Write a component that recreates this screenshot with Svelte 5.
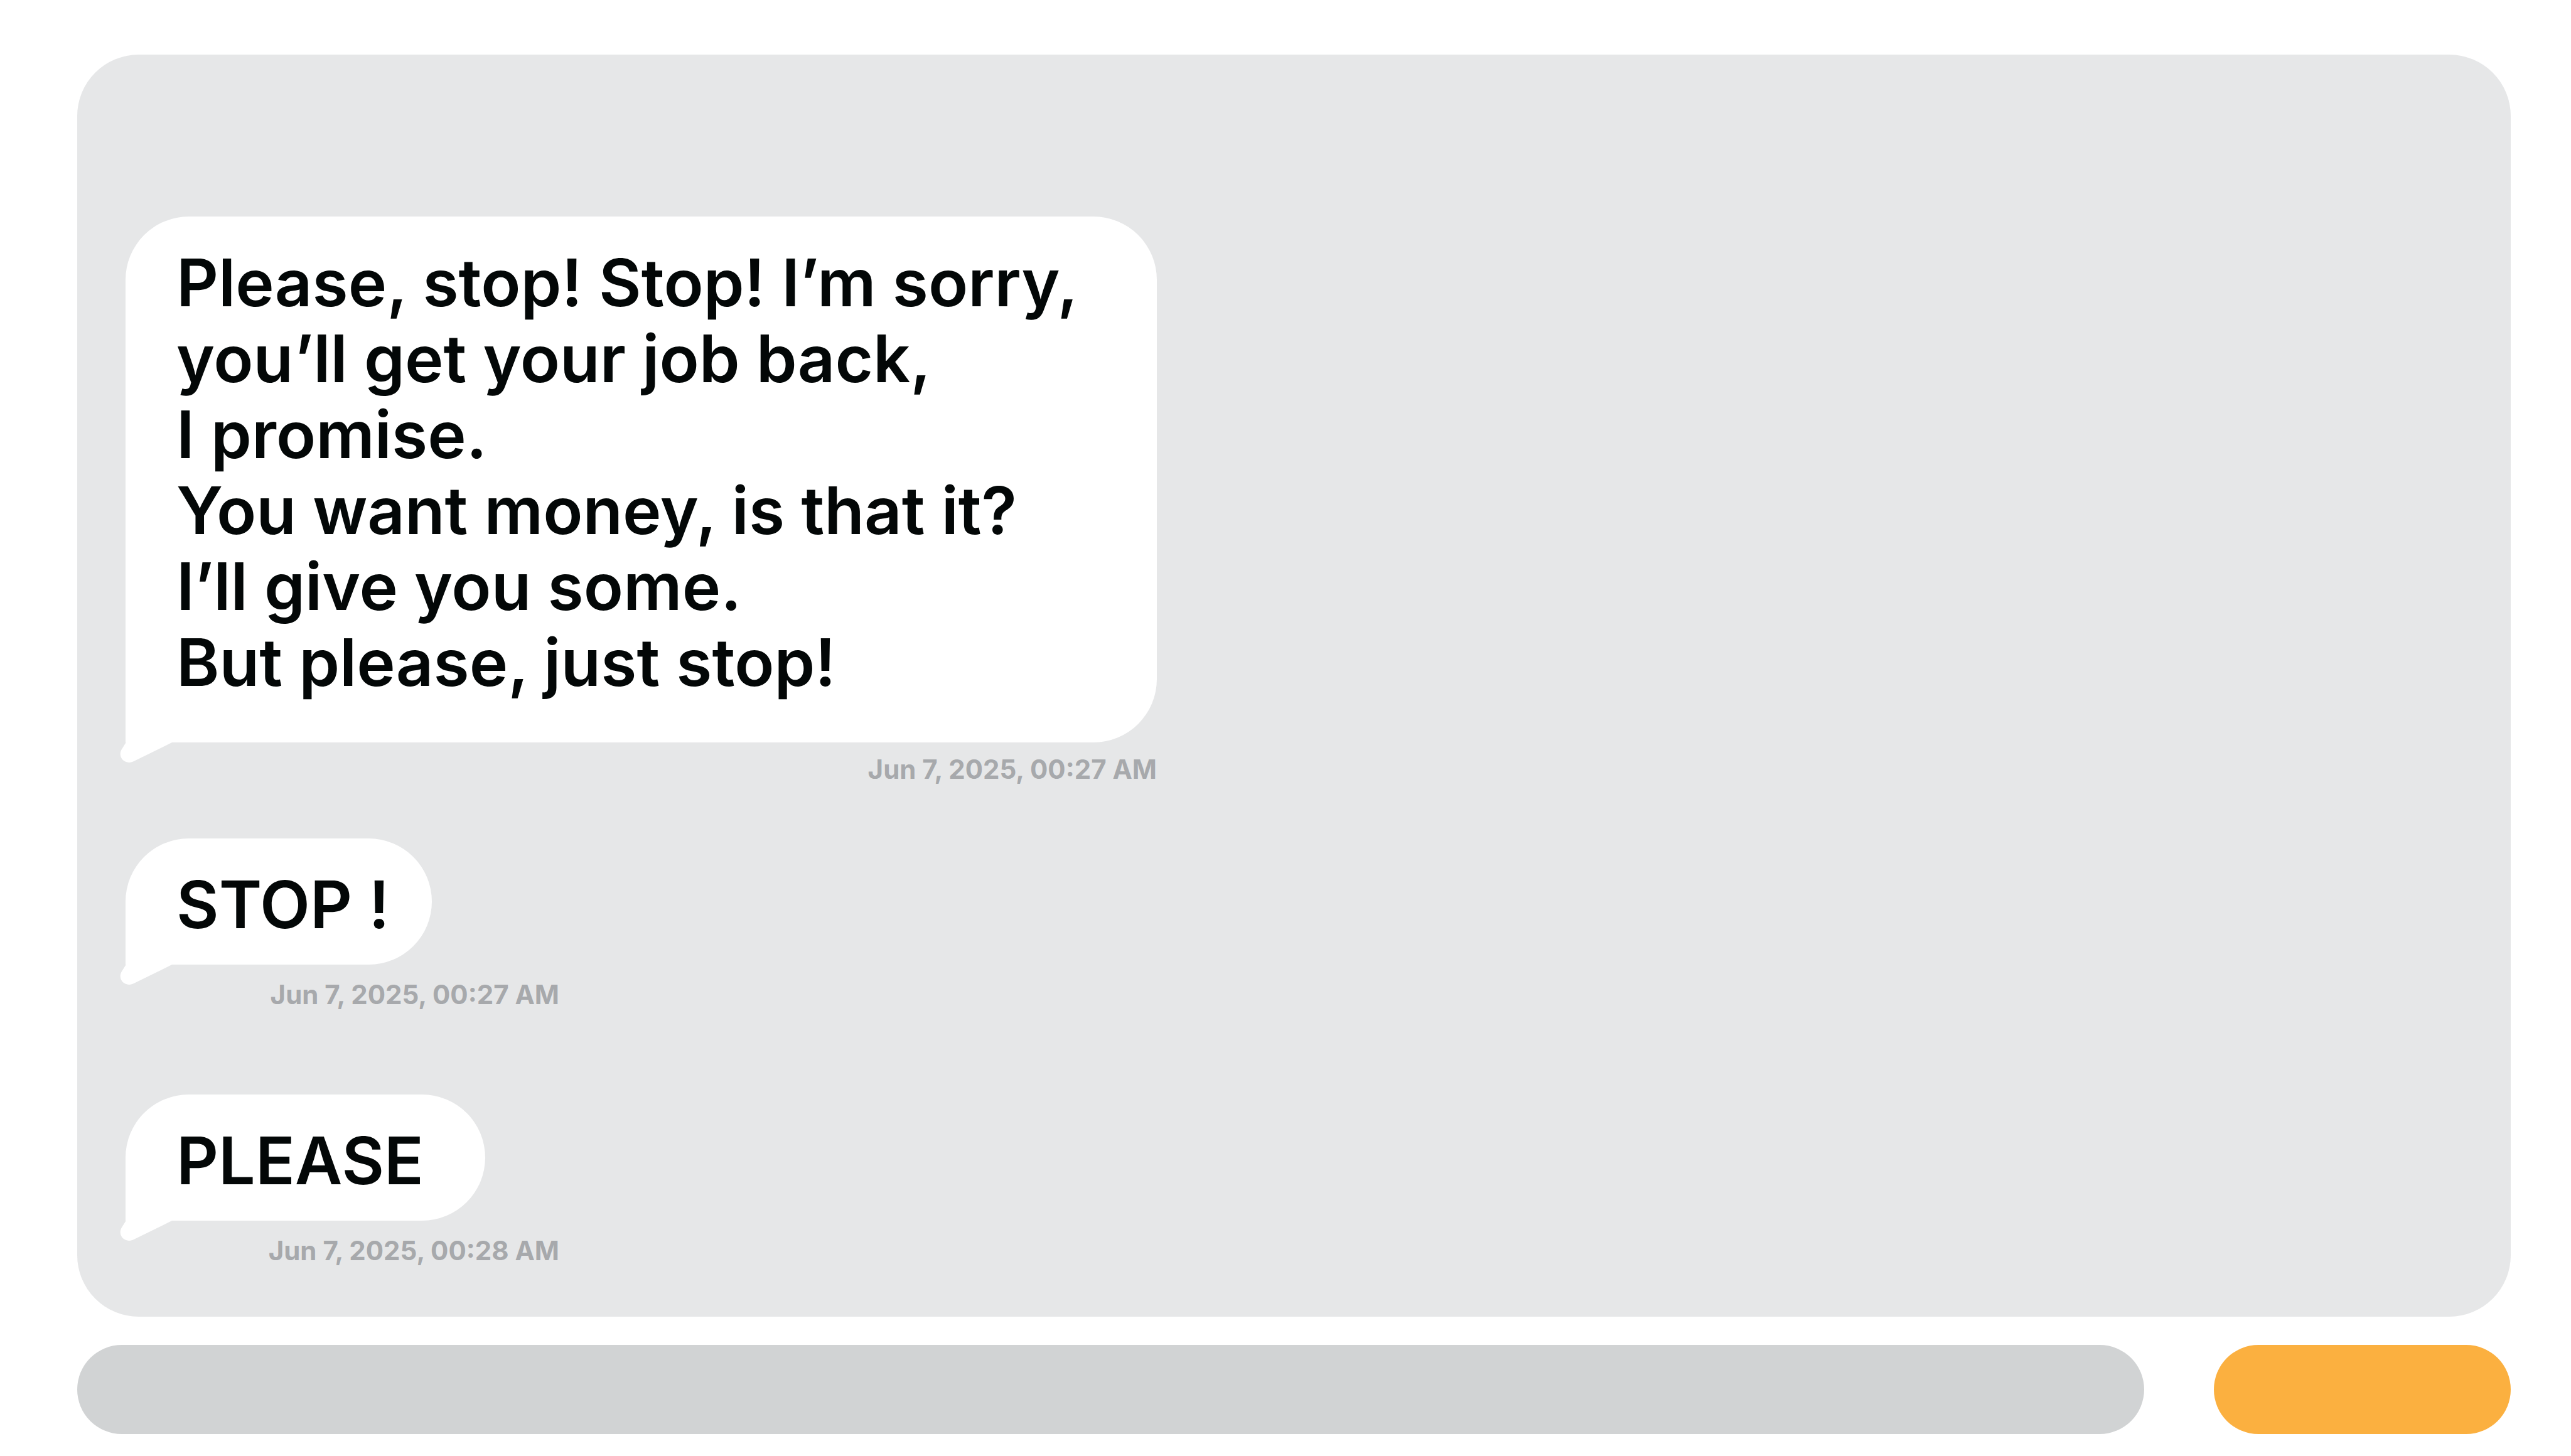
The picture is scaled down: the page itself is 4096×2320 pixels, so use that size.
<script>
  const messages = [
    {
      size: 'long',
      lines: [
        'Please, stop! Stop! I’m sorry,',
        'you’ll get your job back,',
        'I promise.',
        'You want money, is that it?',
        'I’ll give you some.',
        'But please, just stop!'
      ],
      time: 'Jun 7, 2025, 00:27 AM'
    },
    { size: 'short', lines: ['STOP !'], time: 'Jun 7, 2025, 00:27 AM' },
    { size: 'medium', lines: ['PLEASE'], time: 'Jun 7, 2025, 00:28 AM' }
  ];
  let draft = $state('');
</script>

<main class="chat">
  <section class="thread" aria-label="Conversation">
    {#each messages as message}
      <article class="message {message.size}">
        <div class="bubble">
          <p>
            {#each message.lines as line}
              <span class="line">{line}</span>
            {/each}
          </p>
          <svg class="tail" viewBox="0 0 98 42" aria-hidden="true">
            <path d="M11 0V4L3 17C-5 32 11 47 27 38L98 3V0Z" fill="#fff" />
          </svg>
        </div>
        <time>{message.time}</time>
      </article>
    {/each}
  </section>
  <form class="composer" onsubmit={(e) => e.preventDefault()}>
    <input type="text" aria-label="Message" bind:value={draft} />
    <button type="submit" aria-label="Send"></button>
  </form>
</main>

<style>
  :global(body) {
    margin: 0;
    background: #fff;
  }
  .chat {
    box-sizing: border-box;
    min-height: 100vh;
    display: flex;
    flex-direction: column;
    gap: 45px;
    padding: 87px 96px 35px 123px;
    font-family: Inter, 'Liberation Sans', sans-serif;
  }
  .thread {
    flex: 1;
    display: flex;
    flex-direction: column;
    justify-content: flex-end;
    align-items: flex-start;
    gap: 134px;
    padding: 80px 77px;
    border-radius: 98px;
    background: #e6e7e8;
  }
  .message {
    display: flex;
    flex-direction: column;
    align-items: flex-start;
    min-width: 691px;
  }
  .bubble {
    position: relative;
    box-sizing: border-box;
    padding: 45px 81px 35px;
    border-radius: 101px 101px 101px 0;
    background: #fff;
    color: #030707;
  }
  .short .bubble {
    width: 488px;
  }
  .medium .bubble {
    width: 573px;
  }
  .long {
    margin-bottom: -49px;
  }
  .long .bubble {
    width: 1643px;
    padding-bottom: 67px;
  }
  p {
    margin: 0;
    font-size: 104px;
    font-weight: 560;
    line-height: 121px;
    white-space: nowrap;
  }
  .line {
    display: block;
  }
  .tail {
    position: absolute;
    left: -9px;
    bottom: -33px;
    width: 84px;
    height: 36px;
  }
  time {
    align-self: flex-end;
    margin-top: 24px;
    margin-bottom: 1px;
    color: #a7a9ac;
    font-size: 42px;
    font-weight: 700;
    line-height: 48px;
  }
  .long time {
    margin-top: 19px;
  }
  .composer {
    display: flex;
    gap: 111px;
  }
  input,
  button {
    box-sizing: border-box;
    height: 142px;
    border: 0;
    border-radius: 71px;
  }
  input {
    flex: 1;
    min-width: 0;
    padding: 0 70px;
    background: #d1d3d4;
    color: #030707;
    font: 500 60px Inter, 'Liberation Sans', sans-serif;
  }
  button {
    width: 473px;
    background: #fbb040;
  }
</style>
